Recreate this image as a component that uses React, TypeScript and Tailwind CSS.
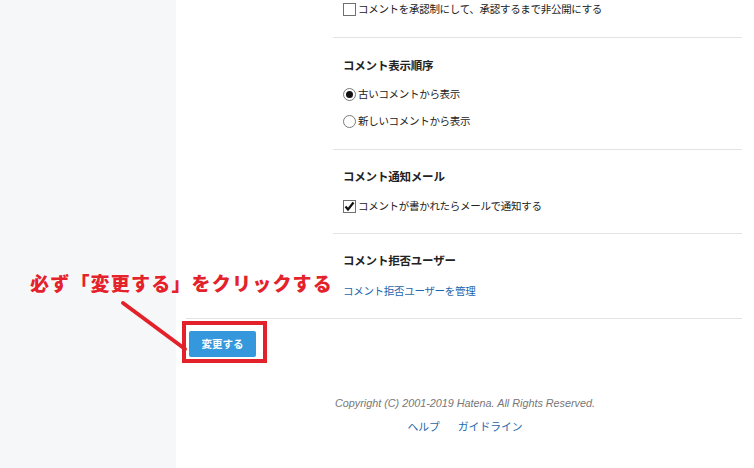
import React from "react";

const jp = { fontFamily: '"Noto Sans CJK JP", "Noto Sans", sans-serif' };

function Checkbox({ checked }: { checked?: boolean }) {
  return (
    <span className="relative inline-block w-[13px] h-[13px] border border-[#707070] bg-white shrink-0">
      {checked && (
        <svg viewBox="0 0 13 13" className="absolute left-[-1px] top-[-1px] w-[13px] h-[13px]">
          <path d="M2.5 6.5 L5 9.5 L10.5 2.5" stroke="#111" strokeWidth="2.2" fill="none" />
        </svg>
      )}
    </span>
  );
}

function Radio({ checked }: { checked?: boolean }) {
  return (
    <span className="inline-flex items-center justify-center w-[13px] h-[13px] rounded-full border border-[#7a7a7a] bg-white shrink-0">
      {checked && <span className="w-[7px] h-[7px] rounded-full bg-[#111]" />}
    </span>
  );
}

export default function App() {
  return (
    <div className="relative flex w-[754px] min-h-[468px] bg-white overflow-hidden" style={jp}>
      <aside className="w-[176px] shrink-0 bg-[#f6f7f9]" />
      <main className="flex-1 flex flex-col">
        <div className="ml-[157px] mr-[12px] text-[#222]">
          <div className="pb-[19px] pl-[10px] border-b border-[#e3e3e3]">
            <label className="flex items-center gap-[2px] h-[18px] text-[10.5px] tracking-[-0.3px]">
              <Checkbox />
              <span>コメントを承認制にして、承認するまで非公開にする</span>
            </label>
          </div>

          <div className="pt-[17px] pb-[19px] pl-[10px] border-b border-[#e3e3e3]">
            <h3 className="h-[20px] leading-[20px] text-[11.5px] font-bold tracking-[-0.2px]">コメント表示順序</h3>
            <div className="mt-[10px] flex flex-col gap-[9px]">
              <label className="flex items-center gap-[2px] h-[18px] text-[10.5px] tracking-[-0.3px]">
                <Radio checked />
                <span>古いコメントから表示</span>
              </label>
              <label className="flex items-center gap-[2px] h-[18px] text-[10.5px] tracking-[-0.3px]">
                <Radio />
                <span>新しいコメントから表示</span>
              </label>
            </div>
          </div>

          <div className="pt-[16px] pb-[18px] pl-[10px] border-b border-[#e3e3e3]">
            <h3 className="h-[20px] leading-[20px] text-[11.5px] font-bold tracking-[-0.2px]">コメント通知メール</h3>
            <label className="mt-[11px] flex items-center gap-[2px] h-[18px] text-[10.5px] tracking-[-0.3px]">
              <Checkbox checked />
              <span>コメントが書かれたらメールで通知する</span>
            </label>
          </div>

          <div className="pt-[16px] pb-[18px] pl-[10px]">
            <h3 className="h-[20px] leading-[20px] text-[11.5px] font-bold tracking-[-0.2px]">コメント拒否ユーザー</h3>
            <a className="mt-[12px] block h-[18px] leading-[18px] text-[10.5px] tracking-[-0.3px] text-[#1d66ad]">
              コメント拒否ユーザーを管理
            </a>
          </div>
        </div>

        <div className="ml-[10px] mr-[12px] border-t border-[#e3e3e3] pt-[10px] pl-[3px]">
          <button className="w-[67px] h-[26px] rounded-[2px] bg-[#3598dc] text-white text-[10.5px] font-bold">
            変更する
          </button>
        </div>

        <footer className="mt-[39px] flex flex-col items-center">
          <p
            className="text-[10.8px] italic text-[#777] leading-[14px]"
            style={{ fontFamily: '"Liberation Sans", Arial, sans-serif' }}
          >
            Copyright (C) 2001-2019 Hatena. All Rights Reserved.
          </p>
          <div className="mt-[8px] flex gap-[18px] text-[10.8px] text-[#1d66ad] leading-[16px]">
            <a>ヘルプ</a>
            <a>ガイドライン</a>
          </div>
        </footer>
      </main>

      {/* annotation overlay */}
      <div className="absolute left-[182px] top-[321px] w-[85px] h-[42px] border-[4px] border-[#e3212b]" />
      <div
        className="absolute left-[30px] top-[270px] text-[19px] font-black tracking-[1.2px] text-[#e4222b] leading-[26px] whitespace-nowrap"
        style={{ textShadow: "0 0 2px #fff, 0 0 2px #fff" }}
      >
        必ず「変更する」をクリックする
      </div>
      <svg className="absolute left-[118px] top-[298px]" width="72" height="58" viewBox="0 0 72 58">
        <line x1="5" y1="5" x2="67" y2="51" stroke="#e3212b" strokeWidth="4" strokeLinecap="round" />
      </svg>
    </div>
  );
}
